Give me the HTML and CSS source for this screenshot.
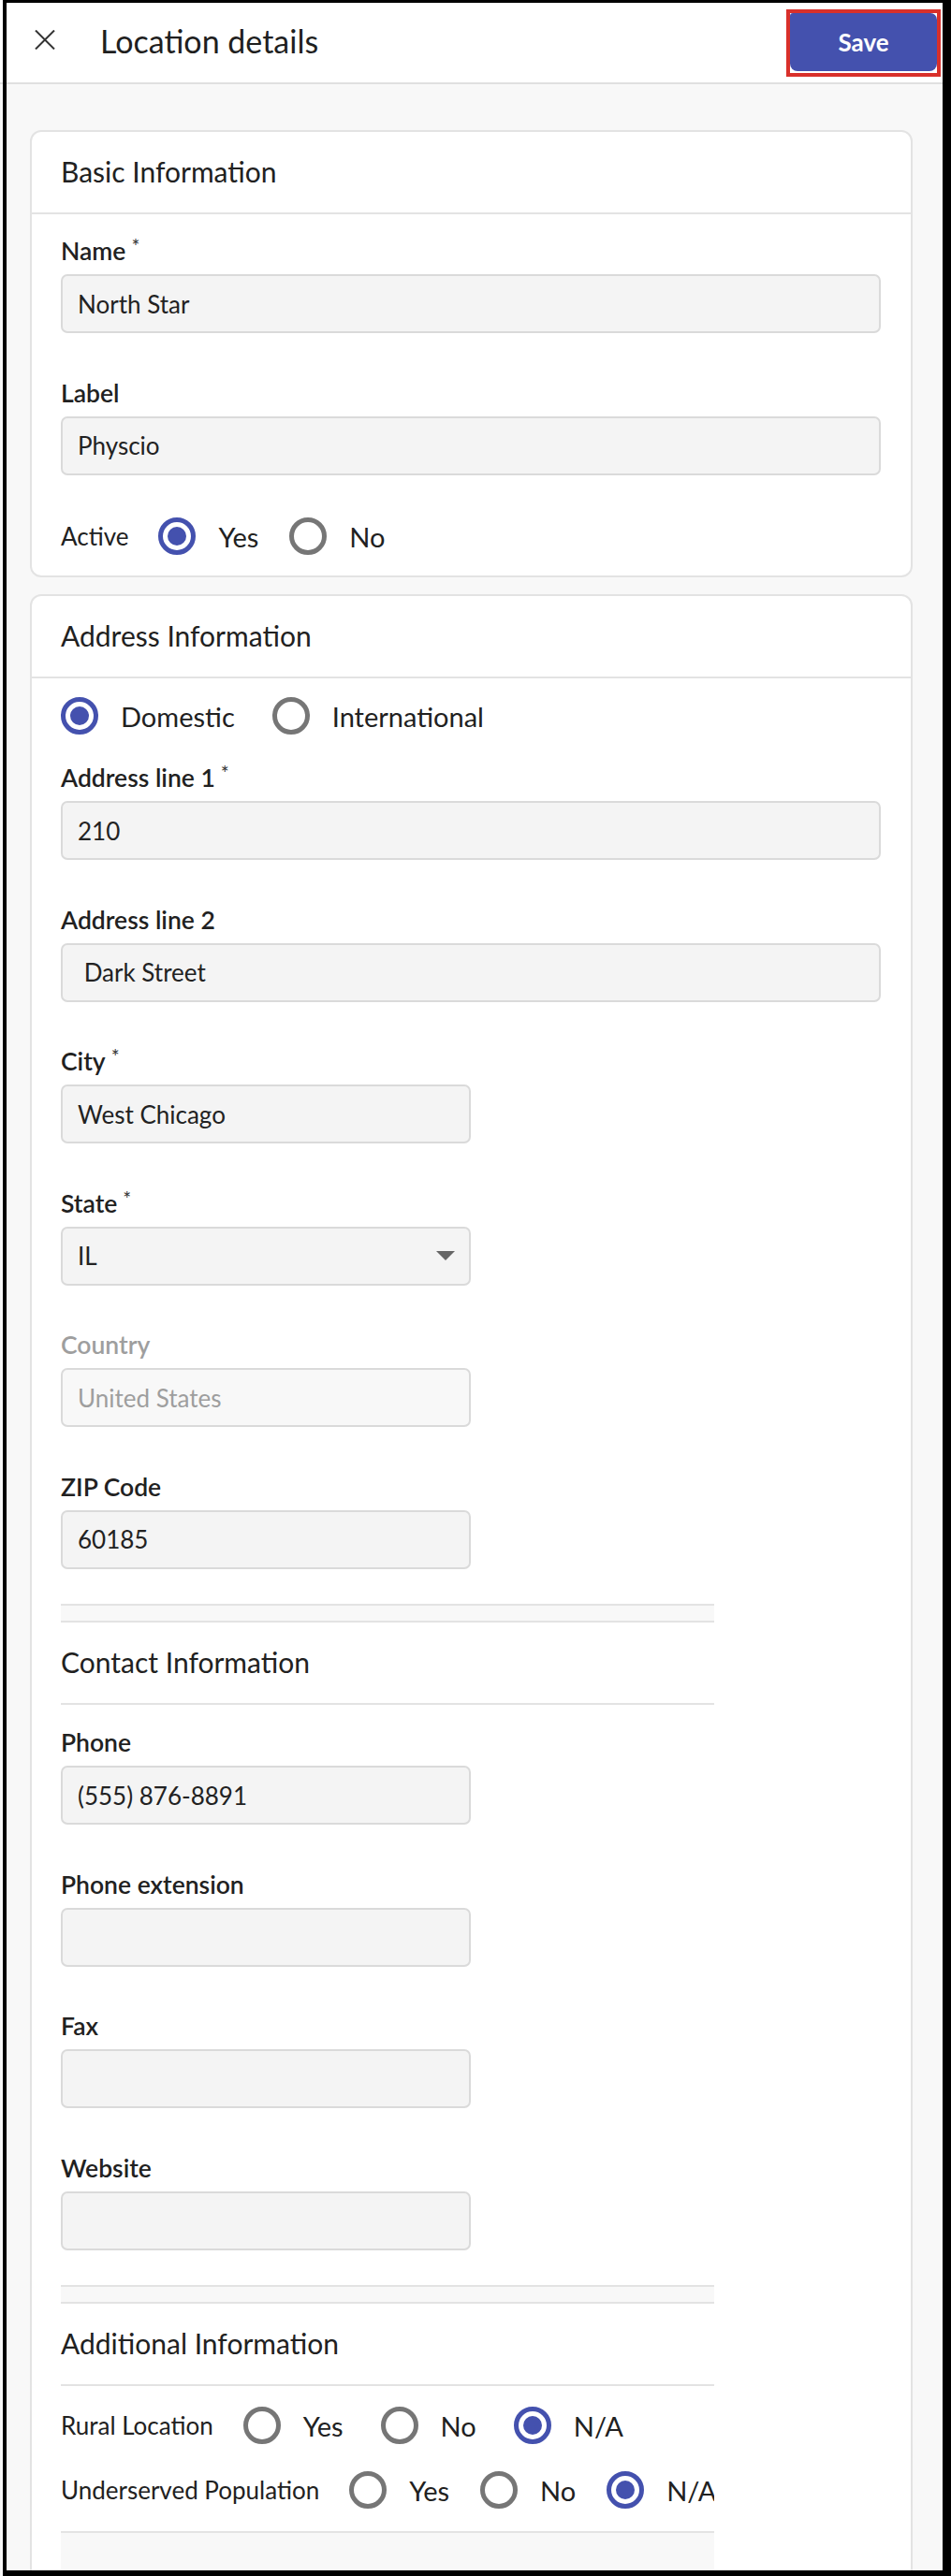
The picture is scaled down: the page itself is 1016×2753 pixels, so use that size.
FILE: index.html
```html
<!DOCTYPE html>
<html lang="en">
<head>
<meta charset="utf-8">
<title>Location details</title>
<link rel="stylesheet" href="styles.css">
</head>
<body>
<div class="frame">
  <header class="topbar">
    <button class="close" aria-label="Close">
      <svg width="22" height="21" viewBox="0 0 22 21"><path d="M1 0.5L21 20.5M21 0.5L1 20.5" stroke="#333" stroke-width="2" fill="none"/></svg>
    </button>
    <h1 class="title">Location details</h1>
    <div class="save-focus"><button class="save">Save</button></div>
  </header>

  <main class="content">
    <section class="card">
      <h2 class="card-head">Basic Information</h2>
      <div class="card-body">
        <div class="field">
          <label class="label">Name<span class="req">*</span></label>
          <div class="input">North Star</div>
        </div>
        <div class="field">
          <label class="label">Label</label>
          <div class="input">Physcio</div>
        </div>
        <div class="radio-row">
          <span class="row-label">Active</span>
          <span class="option"><span class="radio checked"></span>Yes</span>
          <span class="option"><span class="radio"></span>No</span>
        </div>
      </div>
    </section>

    <section class="card">
      <h2 class="card-head">Address Information</h2>
      <div class="card-body card-body--open">
        <div class="radio-row radio-row--kind radio-row--wide">
          <span class="option"><span class="radio checked"></span>Domestic</span>
          <span class="option"><span class="radio"></span>International</span>
        </div>
        <div class="group">
          <div class="field">
            <label class="label">Address line 1<span class="req">*</span></label>
            <div class="input">210</div>
          </div>
          <div class="field">
            <label class="label">Address line 2</label>
            <div class="input">&nbsp;Dark Street</div>
          </div>
          <div class="field">
            <label class="label">City<span class="req">*</span></label>
            <div class="input half">West Chicago</div>
          </div>
          <div class="field">
            <label class="label">State<span class="req">*</span></label>
            <div class="input half select">IL<span class="caret"></span></div>
          </div>
          <div class="field">
            <label class="label muted">Country</label>
            <div class="input half disabled">United States</div>
          </div>
          <div class="field">
            <label class="label">ZIP Code</label>
            <div class="input half">60185</div>
          </div>
        </div>

        <div class="sub">
          <div class="band"></div>
          <h3 class="sub-head">Contact Information</h3>
          <div class="group sub-fields">
            <div class="field">
              <label class="label">Phone</label>
              <div class="input half">(555) 876-8891</div>
            </div>
            <div class="field">
              <label class="label">Phone extension</label>
              <div class="input half"></div>
            </div>
            <div class="field">
              <label class="label">Fax</label>
              <div class="input half"></div>
            </div>
            <div class="field">
              <label class="label">Website</label>
              <div class="input half"></div>
            </div>
          </div>

          <div class="band"></div>
          <h3 class="sub-head">Additional Information</h3>
          <div class="radio-row radio-row--first radio-row--wide">
            <span class="row-label">Rural Location</span>
            <span class="option"><span class="radio"></span>Yes</span>
            <span class="option"><span class="radio"></span>No</span>
            <span class="option"><span class="radio checked"></span>N/A</span>
          </div>
          <div class="radio-row radio-row--next">
            <span class="row-label">Underserved Population</span>
            <span class="option"><span class="radio"></span>Yes</span>
            <span class="option"><span class="radio"></span>No</span>
            <span class="option"><span class="radio checked"></span>N/A</span>
          </div>
          <div class="band band--open"></div>
        </div>
      </div>
    </section>
  </main>
</div>
</body>
</html>
```

FILE: styles.css
```css
* {
  box-sizing: border-box;
}

html {
  background: linear-gradient(#fff 0 88px, #e0e0e0 88px 90px, #f8f8f8 90px);
}

body {
  margin: 0;
  font-family: Lato, "Noto Sans", sans-serif;
  color: #212121;
}

/* outer black frame around the whole view */
.frame {
  margin-left: 3px;
  height: 2753px;
  border: solid #000;
  border-width: 3px 9px 6px 4px;
  overflow: hidden;
  background: #f8f8f8;
}

/* ---------- top bar ---------- */
.topbar {
  height: 87px;
  display: flex;
  align-items: center;
  padding: 0 2px 0 30px;
  background: #fff;
  border-bottom: 2px solid #e0e0e0;
}

.close {
  width: 22px;
  height: 21px;
  padding: 0;
  margin-bottom: 6px;
  border: 0;
  background: none;
  display: flex;
}

.title {
  flex: 1;
  margin: 0 0 4px 48px;
  font-size: 34px;
  font-weight: 400;
  color: #1f1f1f;
  line-height: 40px;
}

.save-focus {
  width: 165px;
  height: 72px;
  border: 4px solid #d9302b;
  padding-bottom: 2px;
  background: #fff;
}

.save {
  display: block;
  width: 157px;
  height: 62px;
  border: 0;
  border-radius: 3px 7px 8px 8px;
  background: #4451ae;
  color: #fff;
  font-family: inherit;
  font-size: 26px;
  font-weight: 700;
}

/* ---------- cards ---------- */
.content {
  padding: 49px 32px 0 25px;
}

.card {
  background: #fff;
  border: 2px solid #e3e3e3;
  border-radius: 12px;
  margin-bottom: 18px;
}

.card-head,
.sub-head {
  margin: 0;
  height: 88px;
  display: flex;
  align-items: center;
  padding-bottom: 3px;
  font-size: 30px;
  font-weight: 400;
  color: #212121;
  border-bottom: 2px solid #e3e3e3;
}

.card-head {
  padding-left: 31px;
  padding-right: 31px;
}

.card-body {
  padding: 23px 32px 22px 31px;
}

.card-body--open {
  padding-top: 20px;
  padding-bottom: 0;
}

/* ---------- fields ---------- */
.field {
  margin-bottom: 47.5px;
}

.group .field:last-child {
  margin-bottom: 0;
}

.field + .radio-row {
  margin-top: -2px;
}

.label {
  display: block;
  height: 34px;
  line-height: 32px;
  margin-bottom: 7px;
  font-size: 26.5px;
  font-weight: 600;
  color: #212121;
}

.label.muted {
  color: #9e9e9e;
}

/* required-field marker */
.req {
  display: inline-block;
  vertical-align: top;
  margin-left: 6px;
  font-size: 21px;
  line-height: 22px;
  font-weight: 400;
  color: #333;
}

.input {
  height: 63px;
  display: flex;
  align-items: center;
  padding: 0 16px;
  background: #f4f4f4;
  border: 2px solid #dadada;
  border-radius: 7px;
  font-size: 26px;
  color: #222;
  white-space: pre;
}

.input.half {
  width: 438px;
}

.input.disabled {
  background: #f8f8f8;
  color: #9e9e9e;
}

.input.select {
  justify-content: space-between;
  padding-right: 15px;
}

.caret {
  width: 0;
  height: 0;
  border-left: 10px solid transparent;
  border-right: 10px solid transparent;
  border-top: 10px solid #666;
}

/* ---------- radios ---------- */
.radio-row {
  height: 40px;
  display: flex;
  align-items: center;
  flex-wrap: nowrap;
  white-space: nowrap;
  font-size: 29px;
  color: #212121;
}

.radio-row--kind {
  margin-bottom: 30px;
}

.radio-row--first {
  margin-top: 22px;
}

.radio-row--next {
  margin-top: 29px;
}

.row-label {
  flex-shrink: 0;
  margin-right: 32px;
  font-size: 26px;
}

.option {
  flex-shrink: 0;
  display: flex;
  align-items: center;
  margin-right: 33px;
}

.radio-row--wide .option {
  margin-right: 40px;
}

.radio {
  position: relative;
  width: 40px;
  height: 40px;
  margin-right: 24px;
  border: 5px solid #767676;
  border-radius: 50%;
}

.radio.checked {
  border-color: #4451ae;
}

.radio.checked::after {
  content: "";
  position: absolute;
  left: 5px;
  top: 5px;
  width: 20px;
  height: 20px;
  border-radius: 50%;
  background: #4451ae;
}

/* ---------- nested sections ---------- */
.sub {
  width: 698px;
  margin-top: 37.5px;
  overflow: hidden;
}

.band {
  height: 20px;
  background: #f8f8f8;
  border-top: 2px solid #e3e3e3;
  border-bottom: 2px solid #e3e3e3;
}

.band--open {
  height: 120px;
  margin-top: 24px;
  border-bottom: 0;
}

.sub-fields {
  padding-top: 24px;
  margin-bottom: 37.5px;
}
```
